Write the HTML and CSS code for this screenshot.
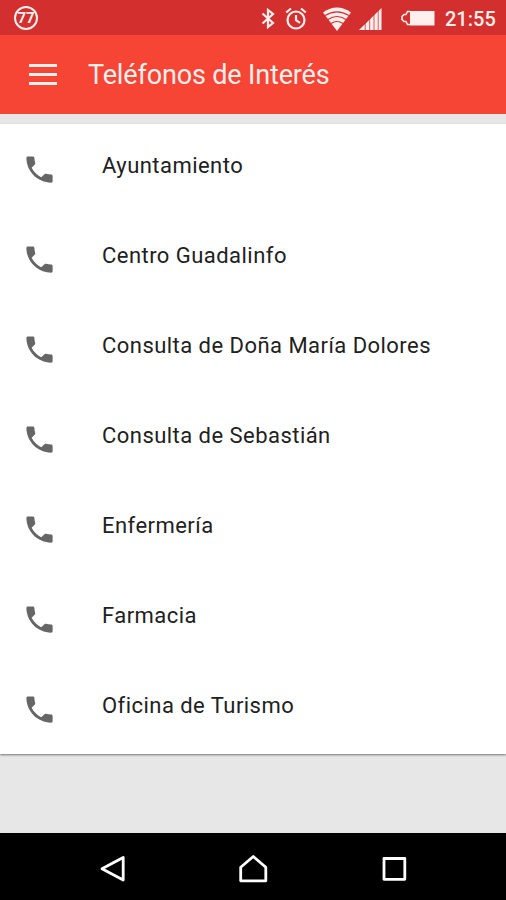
FILE: index.html
```html
<!DOCTYPE html>
<html lang="es">
<head>
    <meta charset="UTF-8">
    <meta name="viewport" content="width=device-width, initial-scale=1.0">
    <title>Teléfonos de Interés</title>
    <link rel="stylesheet" href="styles.css">
</head>
<body>
    <svg class="sprite">
        <symbol id="phone" viewBox="0 0 24 24">
            <path d="M6.62 10.79c1.44 2.83 3.76 5.14 6.59 6.59l2.2-2.2c.27-.27.67-.36 1.02-.24 1.12.37 2.33.57 3.57.57.55 0 1 .45 1 1V20c0 .55-.45 1-1 1-9.39 0-17-7.61-17-17 0-.55.45-1 1-1h3.5c.55 0 1 .45 1 1 0 1.25.2 2.45.57 3.57.11.35.03.74-.25 1.02l-2.2 2.2z"/>
        </symbol>
    </svg>

    <div class="status-bar">
        <span class="badge">77</span>
        <svg class="bluetooth" width="14" height="21" viewBox="0 0 14 21">
            <path d="M1.500 5.500l10.500 9.500L7 19V2l5 4L1.500 15.500"/>
        </svg>
        <svg class="alarm" width="22" height="23" viewBox="0 0 22 23">
            <circle cx="11" cy="13" r="8.500"/>
            <path d="M11 8v5.200l4 2.600M1.200 5.500L6 1.500M20.800 5.500L16 1.500"/>
        </svg>
        <svg class="wifi" width="28" height="24" viewBox="0 0 28 24">
            <path class="solid" d="M0 5.500Q14-4.500 28 5.500L14 24z"/>
            <path d="M2 8.600Q14 1 26 8.600M5 12.500Q14 6.500 23 12.500M8 16.500Q14 12.500 20 16.500"/>
        </svg>
        <svg class="signal" width="23" height="22" viewBox="0 0 23 22">
            <path class="solid" d="M0 22L22.500 0v22z"/>
            <path d="M6.200 10v12M10.700 7v15M15 4v18M19.200 0v22"/>
        </svg>
        <svg class="battery" width="34" height="16" viewBox="0 0 34 16">
            <path class="outline" d="M9 1.500H6.500L5 4.500H3L1 6.500v3l2 2h2l1.500 3H9"/>
            <path class="solid" d="M9 1h24.500v14.500H9z"/>
        </svg>
        <span class="time">21:55</span>
    </div>

    <div class="toolbar">
        <div class="menu">
            <span></span>
            <span></span>
            <span></span>
        </div>
        <h1>Teléfonos de Interés</h1>
    </div>

    <div class="content">
        <ul class="phone-list">
            <li><svg><use href="#phone"/></svg><span>Ayuntamiento</span></li>
            <li><svg><use href="#phone"/></svg><span>Centro Guadalinfo</span></li>
            <li><svg><use href="#phone"/></svg><span>Consulta de Doña María Dolores</span></li>
            <li><svg><use href="#phone"/></svg><span>Consulta de Sebastián</span></li>
            <li><svg><use href="#phone"/></svg><span>Enfermería</span></li>
            <li><svg><use href="#phone"/></svg><span>Farmacia</span></li>
            <li><svg><use href="#phone"/></svg><span>Oficina de Turismo</span></li>
        </ul>
    </div>

    <div class="nav-bar">
        <svg width="30" height="30" viewBox="0 0 30 30"><path d="M26.200 3.500v22.500L5 14.800z"/></svg>
        <svg width="30" height="30" viewBox="0 0 30 30"><path d="M2.700 26.800V13.200L15.300 2.500l12.500 10.700v13.600z"/></svg>
        <svg width="30" height="30" viewBox="0 0 30 30"><path d="M5 4.500h20.800v20.800H5z"/></svg>
    </div>
</body>
</html>
```
FILE: styles.css
```css
* {
    box-sizing: border-box;
}
body {
    margin: 0;
    height: 900px;
    display: flex;
    flex-direction: column;
    font-family: Roboto, "Liberation Sans", sans-serif;
    background-color: #e7e7e7;
    overflow: hidden;
}
.sprite {
    display: none;
}
.status-bar {
    height: 35px;
    flex-shrink: 0;
    display: flex;
    align-items: center;
    padding: 1px 10px 0 14px;
    background-color: #d32f2f;
    color: #ffefed;
}
.status-bar svg {
    fill: none;
    stroke: #ffefed;
    stroke-width: 2.2;
    flex-shrink: 0;
}
.status-bar .solid {
    fill: #ffefed;
    stroke: none;
}
.badge {
    width: 24px;
    height: 24px;
    margin-right: auto;
    border: 2px solid #ffefed;
    border-radius: 50%;
    font-size: 15px;
    font-weight: bold;
    line-height: 20px;
    text-align: center;
}
.alarm {
    margin-left: 10px;
}
.wifi {
    margin: 2px 0 0 16px;
}
.status-bar .wifi {
    stroke: #d32f2f;
    stroke-width: 1.2;
}
.signal {
    margin: 2px 0 0 8px;
}
.status-bar .signal {
    stroke: #d32f2f;
    stroke-width: 0.8;
}
.battery {
    margin-left: 19px;
}
.status-bar .battery {
    stroke-width: 1.6;
}
.time {
    width: 51px;
    margin: 2px 0 0 10px;
    font-size: 20px;
    font-weight: 500;
    white-space: nowrap;
}
.toolbar {
    height: 79px;
    flex-shrink: 0;
    display: flex;
    align-items: center;
    padding-left: 29px;
    background-color: #f64435;
}
.menu {
    width: 28px;
    display: flex;
    flex-direction: column;
    gap: 6px;
}
.menu span {
    height: 3px;
    background-color: #ffefed;
}
.toolbar h1 {
    margin: 0 0 0 31px;
    color: #ffefed;
    font-size: 27px;
    font-weight: 400;
    letter-spacing: -0.15px;
    white-space: nowrap;
}
.content {
    flex: 1;
    padding-top: 10px;
}
.phone-list {
    margin: 0;
    padding: 0;
    list-style: none;
    background-color: #fff;
    box-shadow: 0 1px 2px rgba(0,0,0,0.5);
}
.phone-list li {
    height: 90px;
    display: flex;
    align-items: flex-start;
    padding: 28px 0 0 22px;
}
.phone-list svg {
    width: 35px;
    height: 35px;
    fill: #666;
}
.phone-list span {
    margin-left: 45px;
    color: #212121;
    font-size: 22px;
    line-height: 28px;
    letter-spacing: 0.46px;
    white-space: nowrap;
}
.nav-bar {
    height: 67px;
    flex-shrink: 0;
    display: flex;
    justify-content: center;
    gap: 111px;
    padding-top: 21px;
    background-color: #000;
}
.nav-bar svg {
    fill: none;
    stroke: #fff;
    stroke-width: 2.8;
    stroke-linejoin: round;
}
```
